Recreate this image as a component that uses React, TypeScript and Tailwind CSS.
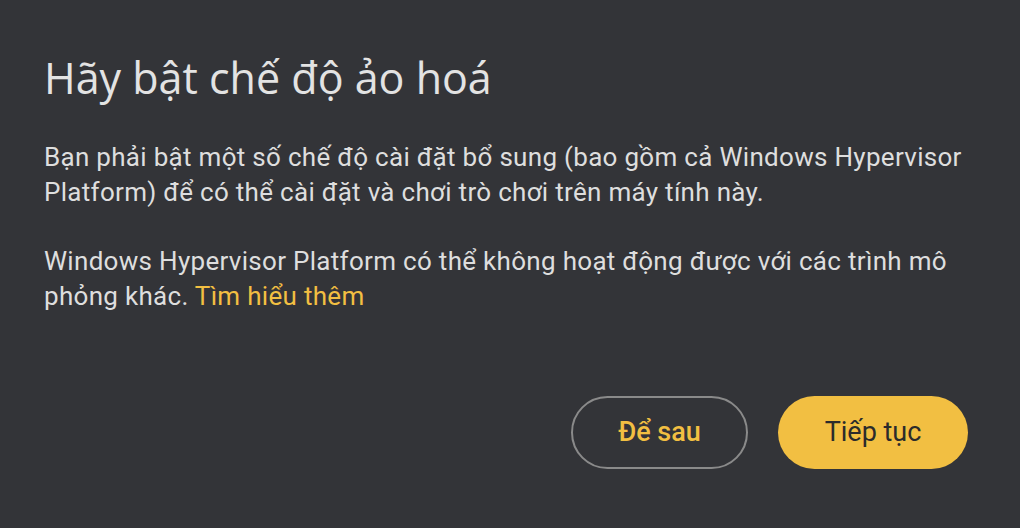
export default function App() {
  return (
    <div className="w-[1020px] h-[528px] bg-[#333438] flex flex-col pl-[44px] pr-[40px] pt-[50px] font-['Roboto',sans-serif] text-[#dedede]">
      <h1 className="font-['Open_Sans',sans-serif] text-[43px] leading-[56px] text-[#e3e3e3]">
        Hãy bật chế độ ảo hoá
      </h1>
      <p className="mt-[34px] text-[26px] tracking-[0.3px] leading-[35px]">
        Bạn phải bật một số chế độ cài đặt bổ sung (bao gồm cả Windows Hypervisor Platform) để có thể cài đặt và chơi trò chơi trên máy tính này.
      </p>
      <p className="mt-[34px] text-[26px] tracking-[0.3px] leading-[35px]">
        Windows Hypervisor Platform có thể không hoạt động được với các trình mô phỏng khác.{' '}
        <a className="text-[#f2bf42]">Tìm hiểu thêm</a>
      </p>
      <div className="mt-auto mb-[59px] mr-[12px] flex justify-end gap-[30px]">
        <button className="w-[177px] h-[73px] rounded-full border-2 border-[#8a8a8a] text-[#f2bf42] text-[27px] font-medium">
          Để sau
        </button>
        <button className="w-[190px] h-[73px] rounded-full bg-[#f2bf42] text-[#2b2b2b] text-[27px]">
          Tiếp tục
        </button>
      </div>
    </div>
  )
}
